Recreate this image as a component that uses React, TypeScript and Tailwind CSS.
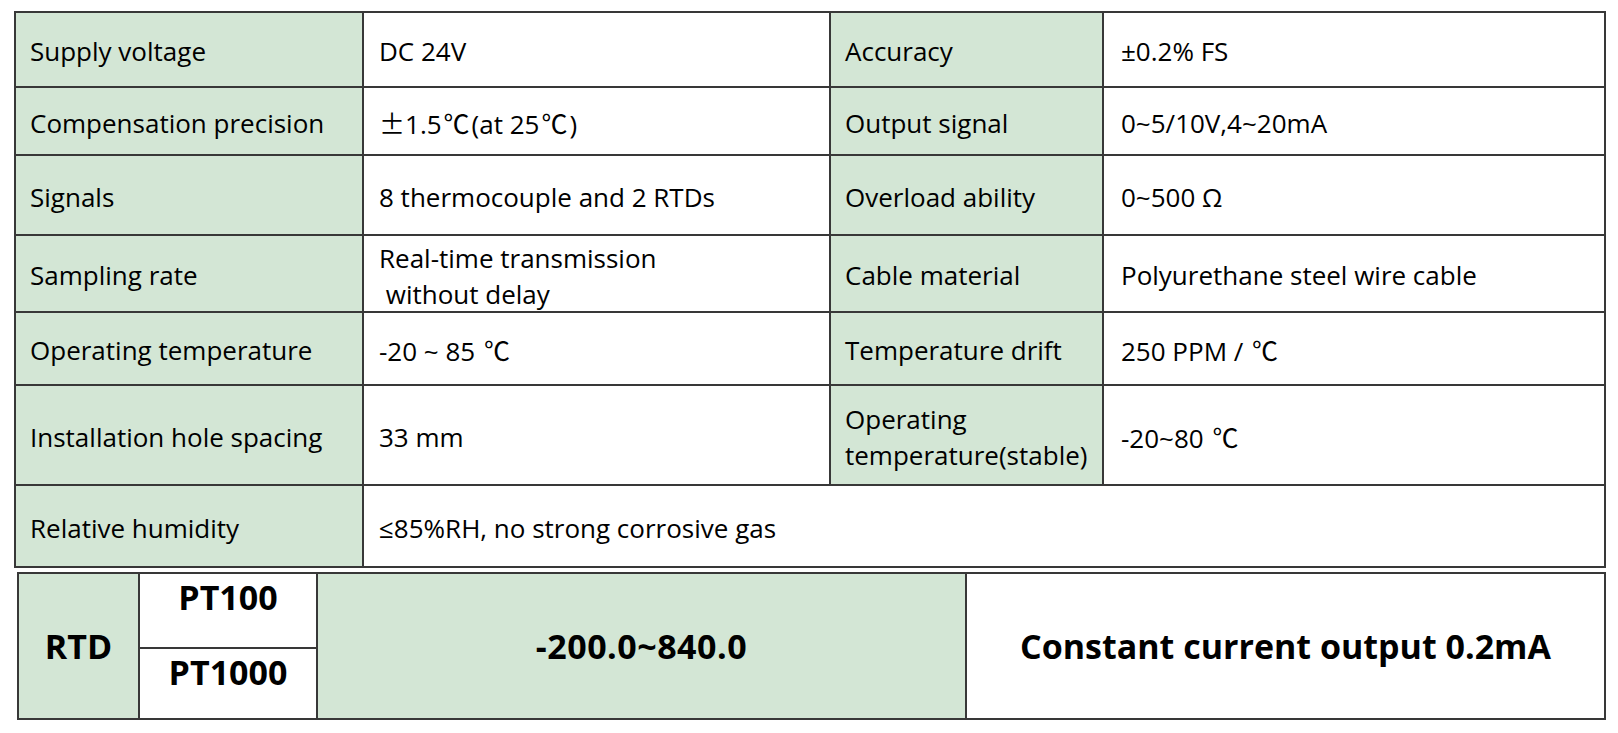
const font = { fontFamily: '"Open Sans", "Noto Sans CJK SC", sans-serif' };
const cjk = { fontFamily: '"Noto Sans CJK SC", sans-serif' };

const C = () => (
  <span className="mx-[2px]" style={cjk}>
    ℃
  </span>
);

type Row = { h: string; a: string; b: React.ReactNode; c?: React.ReactNode; d?: React.ReactNode };

const rows: Row[] = [
  { h: "h-[73px]", a: "Supply voltage", b: "DC 24V", c: "Accuracy", d: "±0.2% FS" },
  {
    h: "h-[66px]",
    a: "Compensation precision",
    b: (
      <span>
        <span style={cjk}>±</span>1.5<C />(at 25<C />)
      </span>
    ),
    c: "Output signal",
    d: "0~5/10V,4~20mA",
  },
  { h: "h-[78px]", a: "Signals", b: "8 thermocouple and 2 RTDs", c: "Overload ability", d: "0~500 Ω" },
  {
    h: "h-[75px]",
    a: "Sampling rate",
    b: (
      <span className="whitespace-pre leading-[36px]">
        {"Real-time transmission\n without delay"}
      </span>
    ),
    c: "Cable material",
    d: "Polyurethane steel wire cable",
  },
  {
    h: "h-[71px]",
    a: "Operating temperature",
    b: <span>-20 ~ 85 <C /></span>,
    c: "Temperature drift",
    d: <span>250 PPM / <C /></span>,
  },
  {
    h: "h-[98px]",
    a: "Installation hole spacing",
    b: "33 mm",
    c: <span className="leading-[36px]">Operating<br />temperature(stable)</span>,
    d: <span>-20~80 <C /></span>,
  },
];

function Cell({ green, children, className = "" }: { green?: boolean; children: React.ReactNode; className?: string }) {
  return (
    <div className={`flex items-center pt-[4px] ${green ? "bg-[#d3e6d5]" : "bg-white"} ${className}`}>
      {children}
    </div>
  );
}

export default function App() {
  return (
    <div className="w-[1618px] h-[733px] bg-white text-black overflow-hidden" style={font}>
      {/* spec table */}
      <div className="ml-[14px] mt-[11px] w-[1592px] p-[2px] bg-[#383838] text-[26px]">
        <div className="grid grid-cols-[346px_465px_271px_500px] gap-[2px]">
          {rows.map((r) => (
            <div key={r.a} className="contents">
              <Cell green className={`${r.h} pl-[14px]`}>{r.a}</Cell>
              <Cell className={`${r.h} pl-[15px]`}>{r.b}</Cell>
              <Cell green className={`${r.h} pl-[14px]`}>{r.c}</Cell>
              <Cell className={`${r.h} pl-[17px]`}>{r.d}</Cell>
            </div>
          ))}
          <Cell green className="h-[80px] pl-[14px]">Relative humidity</Cell>
          <Cell className="h-[80px] col-span-3 pl-[15px]">≤85%RH, no strong corrosive gas</Cell>
        </div>
      </div>

      {/* RTD table */}
      <div className="ml-[17px] mt-[4px] w-[1589px] p-[2px] bg-[#383838] text-[34px] font-bold">
        <div className="grid grid-cols-[119px_176px_647px_637px] grid-rows-[73px_69px] gap-[2px]">
          <div className="row-span-2 flex items-center justify-center bg-[#d3e6d5]">RTD</div>
          <div className="flex items-center justify-center pb-[26px] bg-white">PT100</div>
          <div className="row-span-2 flex items-center justify-center bg-[#d3e6d5] tracking-[0.5px]">-200.0~840.0</div>
          <div className="row-span-2 flex items-center justify-center bg-white">Constant current output 0.2mA</div>
          <div className="flex items-center justify-center pb-[22px] bg-white">PT1000</div>
        </div>
      </div>
    </div>
  );
}
